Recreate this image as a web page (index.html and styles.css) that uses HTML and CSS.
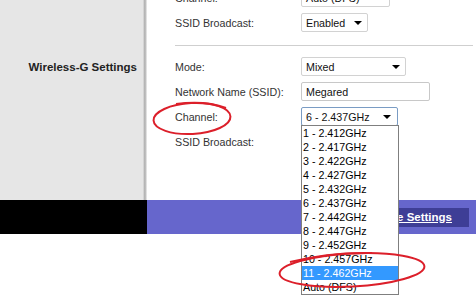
FILE: index.html
```html
<!DOCTYPE html>
<html lang="en">
  <head>
    <meta charset="UTF-8">
    <title>Wireless Settings</title>
    <link rel="stylesheet" href="styles.css">
  </head>
  <body>
    <div class="page">
      <div class="content">
        <aside class="side">
          <h2 class="section-title">Wireless-G Settings</h2>
        </aside>
        <main class="main">
          <div class="form">
            <div class="row">
              <span class="label">Channel:</span>
              <div class="select w-auto">Auto (DFS)</div>
            </div>
            <div class="row">
              <span class="label">SSID Broadcast:</span>
              <div class="select w-enabled">Enabled</div>
            </div>
            <hr class="divider">
            <div class="row">
              <span class="label">Mode:</span>
              <div class="select w-mode">Mixed</div>
            </div>
            <div class="row">
              <span class="label">Network Name (SSID):</span>
              <div class="text-input">Megared</div>
            </div>
            <div class="row">
              <span class="label">Channel:</span>
              <div class="select w-channel focused">6 - 2.437GHz
                <ul class="menu">
                  <li>1 - 2.412GHz</li>
                  <li>2 - 2.417GHz</li>
                  <li>3 - 2.422GHz</li>
                  <li>4 - 2.427GHz</li>
                  <li>5 - 2.432GHz</li>
                  <li>6 - 2.437GHz</li>
                  <li>7 - 2.442GHz</li>
                  <li>8 - 2.447GHz</li>
                  <li>9 - 2.452GHz</li>
                  <li>10 - 2.457GHz</li>
                  <li class="picked">11 - 2.462GHz</li>
                  <li>Auto (DFS)</li>
                </ul>
              </div>
            </div>
            <div class="row">
              <span class="label">SSID Broadcast:</span>
              <!-- covered by the open channel list -->
              <div class="select w-enabled"></div>
            </div>
          </div>
        </main>
      </div>
      <footer class="bar">
        <div class="bar-left"></div>
        <div class="bar-right">
          <a class="save-btn" href="#">Save Settings</a>
        </div>
      </footer>
      <!-- red pen marks drawn over the screenshot -->
      <svg class="marks" width="476" height="300" viewBox="0 0 476 300">
        <ellipse cx="192" cy="118.5" rx="38.5" ry="15.5" transform="rotate(-3 192 118.5)"/>
        <path d="M176 104 Q205 100 226 108"/>
        <ellipse cx="352" cy="270" rx="72.5" ry="16.5" transform="rotate(-3 352 270)"/>
        <path d="M290 262 Q330 252 372 253"/>
      </svg>
    </div>
  </body>
</html>
```

FILE: styles.css
```css
body {
  margin: 0;
  background: #fff;
  font-family: "Liberation Sans", Arial, sans-serif;
}

.page {
  position: relative;
  width: 476px;
  height: 300px;
  overflow: hidden;
}

.content {
  display: flex;
  height: 200px;
}

.side {
  width: 147px;
  flex-shrink: 0;
  background: linear-gradient(to right, #e6e6e6 143px, #c2c2c2 144px, #a9a9a9 145px, #d4d4d4 146px, #ededed 147px);
}

.section-title {
  margin: 0;
  padding: 60px 10px 0 0;
  text-align: right;
  font-size: 11.5px;
  line-height: 14px;
  font-weight: bold;
  color: #222;
}

.main {
  flex: 1;
  padding: 0 3px 0 28px;
}

.form {
  margin-top: -15px;
}

.row {
  display: flex;
  align-items: center;
  height: 25px;
}

.label {
  width: 126px;
  flex-shrink: 0;
  font-size: 10.7px;
  color: #333;
}

.divider {
  margin: 10px 0 8px;
  border: 0;
  border-top: 1px solid #cfcfcf;
  height: 0;
}

.select,
.text-input {
  box-sizing: border-box;
  height: 19px;
  padding: 0 5px 0 4px;
  background: #fff;
  border: 1px solid #d2d2d2;
  border-radius: 2px;
  font-size: 10.7px;
  color: #111;
  display: flex;
  align-items: center;
}

.select {
  justify-content: space-between;
}

.select::after {
  content: "";
  margin-left: auto;
  border-top: 4px solid #000;
  border-left: 4px solid transparent;
  border-right: 4px solid transparent;
}

.text-input {
  width: 129px;
  border-color: #c8c8c8;
}

.w-auto { width: 89px; }
.w-enabled { width: 67px; }
.w-mode { width: 105px; }
.w-channel { width: 97px; padding-right: 6px; }

.focused {
  position: relative;
  border-color: #7a9cc4;
}

.menu {
  position: absolute;
  top: 100%;
  left: -1px;
  z-index: 2;
  width: 96px;
  margin: 0;
  padding: 0;
  list-style: none;
  background: #fff;
  border: 1px solid #7f7f7f;
}

.menu li {
  height: 14px;
  line-height: 14px;
  padding-left: 1px;
  font-size: 10.7px;
  color: #000;
  white-space: nowrap;
}

.menu .picked {
  background: #3399ff;
  color: #fff;
}

.bar {
  display: flex;
  height: 34px;
}

.bar-left {
  width: 147px;
  background: #000;
}

.bar-right {
  flex: 1;
  display: flex;
  align-items: center;
  justify-content: flex-end;
  padding-right: 7px;
  background: #6666cc;
}

.save-btn {
  height: 19px;
  line-height: 19px;
  padding: 0 17px 0 12px;
  background: #3e3e96;
  color: #fff;
  font-size: 11.5px;
  font-weight: bold;
  text-decoration: underline;
}

.marks {
  position: absolute;
  top: 0;
  left: 0;
  z-index: 3;
  pointer-events: none;
  fill: none;
  stroke: #dc1f2a;
  stroke-width: 2;
}
```
